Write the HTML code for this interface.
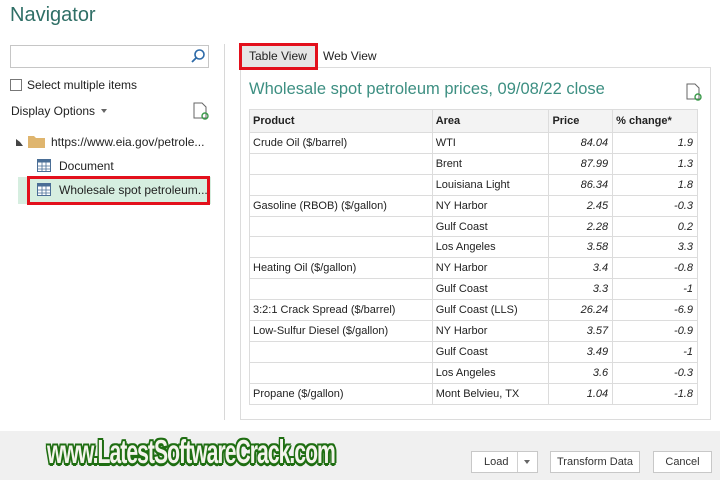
<!DOCTYPE html>
<html><head><meta charset="utf-8"><style>
*{margin:0;padding:0;box-sizing:border-box}
body{width:720px;height:480px;overflow:hidden;background:#fff;font-family:"Liberation Sans",sans-serif;position:relative;color:#222}
.a{position:absolute}
.t{font-size:12px;white-space:nowrap}
table{border-collapse:collapse;position:absolute;left:249px;top:109px;width:449px;font-size:11px}
td{border:1px solid #dcdcdc;height:20.9px;padding:0 3px;white-space:nowrap}
tr:first-child td{background:#f3f3f3;font-weight:bold;height:23px}
td.n{text-align:right;font-style:italic;padding-right:4px}
.wm{font-family:"Liberation Sans",sans-serif;font-weight:bold;font-size:33px;color:#f4f4ec;letter-spacing:-1.5px;transform-origin:0 0;transform:scaleX(0.64);white-space:nowrap;
text-shadow:2px 0 #1f6e12,-2px 0 #1f6e12,0 2px #1f6e12,0 -2px #1f6e12,2px 2px #1f6e12,-2px -2px #1f6e12,2px -2px #1f6e12,-2px 2px #1f6e12,3px 0 #1f6e12,0 3px #1f6e12}
.btn{position:absolute;top:451px;height:22px;border:1px solid #c8c8c8;background:#fff;font-size:11px;text-align:center;line-height:20px;color:#333}
</style></head><body>
<div class="a" style="left:10px;top:4px;font-size:20px;color:#2f6f66">Navigator</div>
<div class="a" style="left:10px;top:45px;width:199px;height:23px;border:1px solid #c6c6c6"></div>
<svg class="a" style="left:190px;top:48px" width="16" height="16"><circle cx="9.5" cy="6.5" r="4.5" fill="none" stroke="#2d6aa8" stroke-width="1.6"/><line x1="6.3" y1="9.7" x2="2" y2="14" stroke="#2d6aa8" stroke-width="1.8"/></svg>
<div class="a" style="left:10px;top:79px;width:12px;height:12px;border:1px solid #777"></div>
<div class="a t" style="left:27px;top:78px">Select multiple items</div>
<div class="a t" style="left:11px;top:104px">Display Options</div>
<div class="a" style="left:101px;top:109px;border:3px solid transparent;border-top:4px solid #666"></div>
<svg class="a" style="left:193px;top:102px" width="16" height="18"><path d="M1 1h8l4 4v11H1z" fill="none" stroke="#666"/><circle cx="12" cy="14" r="3" fill="none" stroke="#3a9a4a" stroke-width="1.4"/></svg>
<div class="a" style="left:16px;top:139px;border:3px solid transparent;border-bottom:4px solid #444;border-left:4px solid #444;width:0;height:0"></div>
<svg class="a" style="left:28px;top:134px" width="17" height="14"><path d="M0 2h6l2 2h9v10H0z" fill="#dfb56e"/></svg>
<div class="a t" style="left:51px;top:135px">https://www.eia.gov/petrole...</div>
<svg class="a" style="left:37px;top:159px" width="14" height="13"><rect x=".5" y=".5" width="13" height="12" fill="#fff" stroke="#4a6e96"/><rect x=".5" y=".5" width="13" height="3" fill="#4a6e96"/><path d="M5 3v10M9 3v10M1 7h13M1 10h13" stroke="#4a6e96" stroke-width=".8"/></svg>
<div class="a t" style="left:59px;top:159px">Document</div>
<div class="a" style="left:18px;top:177px;width:193px;height:27px;background:#d6eee0"></div>
<div class="a" style="left:27px;top:176px;width:183px;height:29px;border:3px solid #e3101c"></div>
<svg class="a" style="left:37px;top:183px" width="14" height="13"><rect x=".5" y=".5" width="13" height="12" fill="#fff" stroke="#4a6e96"/><rect x=".5" y=".5" width="13" height="3" fill="#4a6e96"/><path d="M5 3v10M9 3v10M1 7h13M1 10h13" stroke="#4a6e96" stroke-width=".8"/></svg>
<div class="a t" style="left:59px;top:183px">Wholesale spot petroleum...</div>
<div class="a" style="left:224px;top:44px;width:1px;height:376px;background:#d8d8d8"></div>
<div class="a" style="left:240px;top:67px;width:471px;height:353px;border:1px solid #dcdcdc"></div>
<div class="a" style="left:239px;top:43px;width:79px;height:27px;border:3px solid #e3101c;background:#e6e6e6"></div>
<div class="a t" style="left:249px;top:49px">Table View</div>
<div class="a t" style="left:323px;top:49px">Web View</div>
<div class="a" style="left:249px;top:80px;font-size:16.5px;color:#3d8f82;white-space:nowrap">Wholesale spot petroleum prices, 09/08/22 close</div>
<svg class="a" style="left:686px;top:83px" width="16" height="18"><path d="M1 1h8l4 4v11H1z" fill="none" stroke="#666"/><circle cx="12" cy="14" r="3" fill="none" stroke="#3a9a4a" stroke-width="1.4"/></svg>
<table>
<colgroup><col style="width:183px"><col style="width:117px"><col style="width:64px"><col style="width:85px"></colgroup>
<tr><td>Product</td><td>Area</td><td>Price</td><td>% change*</td></tr>
<tr><td>Crude Oil ($/barrel)</td><td>WTI</td><td class="n">84.04</td><td class="n">1.9</td></tr>
<tr><td></td><td>Brent</td><td class="n">87.99</td><td class="n">1.3</td></tr>
<tr><td></td><td>Louisiana Light</td><td class="n">86.34</td><td class="n">1.8</td></tr>
<tr><td>Gasoline (RBOB) ($/gallon)</td><td>NY Harbor</td><td class="n">2.45</td><td class="n">-0.3</td></tr>
<tr><td></td><td>Gulf Coast</td><td class="n">2.28</td><td class="n">0.2</td></tr>
<tr><td></td><td>Los Angeles</td><td class="n">3.58</td><td class="n">3.3</td></tr>
<tr><td>Heating Oil ($/gallon)</td><td>NY Harbor</td><td class="n">3.4</td><td class="n">-0.8</td></tr>
<tr><td></td><td>Gulf Coast</td><td class="n">3.3</td><td class="n">-1</td></tr>
<tr><td>3:2:1 Crack Spread ($/barrel)</td><td>Gulf Coast (LLS)</td><td class="n">26.24</td><td class="n">-6.9</td></tr>
<tr><td>Low-Sulfur Diesel ($/gallon)</td><td>NY Harbor</td><td class="n">3.57</td><td class="n">-0.9</td></tr>
<tr><td></td><td>Gulf Coast</td><td class="n">3.49</td><td class="n">-1</td></tr>
<tr><td></td><td>Los Angeles</td><td class="n">3.6</td><td class="n">-0.3</td></tr>
<tr><td>Propane ($/gallon)</td><td>Mont Belvieu, TX</td><td class="n">1.04</td><td class="n">-1.8</td></tr>
</table>
<div class="a" style="left:0;top:431px;width:720px;height:49px;background:#f0f0f0"></div>
<div class="a wm" style="left:47px;top:433px">www.LatestSoftwareCrack.com</div>
<div class="btn" style="left:471px;width:67px;text-align:left;padding-left:12px">Load</div>
<div class="a" style="left:517px;top:452px;width:1px;height:20px;background:#d0d0d0"></div>
<div class="a" style="left:524px;top:460px;border:3px solid transparent;border-top:4px solid #666"></div>
<div class="btn" style="left:550px;width:90px">Transform Data</div>
<div class="btn" style="left:653px;width:59px">Cancel</div>
</body></html>
